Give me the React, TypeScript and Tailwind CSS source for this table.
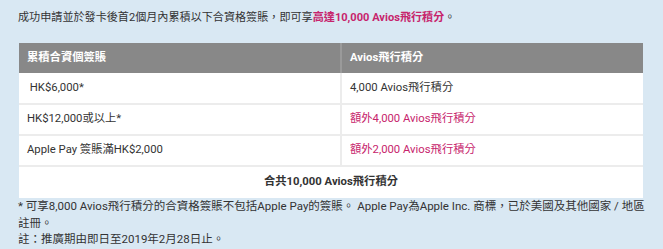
const rows = [
  { spend: '\u00a0HK$6,000*', avios: '4,000 Avios飛行積分', pink: false },
  { spend: 'HK$12,000或以上*', avios: '額外4,000 Avios飛行積分', pink: true },
  { spend: 'Apple Pay 簽賬滿HK$2,000', avios: '額外2,000 Avios飛行積分', pink: true },
]

export default function App() {
  return (
    <div
      className="w-[663px] h-[249px] bg-[#d9e8f3] px-[18px] pt-[10px] text-[11.3px] text-[#333]"
      style={{ fontFamily: 'Roboto, "Noto Sans CJK TC", sans-serif' }}
    >
      <p className="leading-[16px] text-[11.1px]">
        成功申請並於發卡後首2個月內累積以下合資格簽賬，即可享
        <span className="text-[#c7246c] font-bold">高達10,000 Avios飛行積分</span>。
      </p>

      <table className="mt-[17px] ml-px w-[624px] border-collapse bg-white">
        <thead>
          <tr className="h-[30px] bg-[#888888] text-white font-bold text-left">
            <th className="w-[322px] px-[8px] border-r-2 border-[#9a9a9a]">累積合資個簽賬</th>
            <th className="px-[8px]">Avios飛行積分</th>
          </tr>
        </thead>
        <tbody>
          {rows.map((r) => (
            <tr key={r.avios} className="h-[31px] border-b-2 border-[#ececec]">
              <td className="px-[8px] border-r-2 border-[#ececec]">{r.spend}</td>
              <td className={`px-[8px] ${r.pink ? 'text-[#c7246c]' : ''}`}>{r.avios}</td>
            </tr>
          ))}
          <tr className="h-[32px]">
            <td colSpan={2} className="text-center font-bold">
              合共10,000 Avios飛行積分
            </td>
          </tr>
        </tbody>
      </table>

      <div className="leading-[16.5px] text-[11.5px]">
        <p>
          * 可享8,000 Avios飛行積分的合資格簽賬不包括Apple Pay的簽賬。 Apple Pay為Apple Inc. 商標，已於美國及其他國家 / 地區註冊。
        </p>
        <p>註：推廣期由即日至2019年2月28日止。</p>
      </div>
    </div>
  )
}
